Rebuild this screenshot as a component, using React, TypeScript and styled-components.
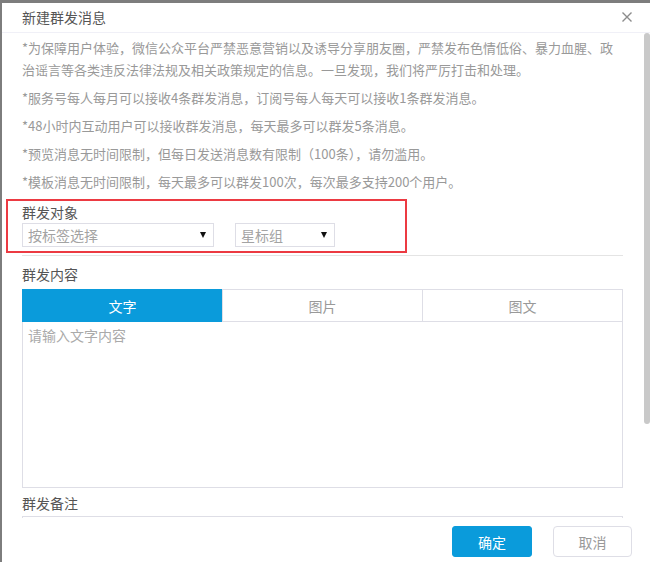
import styled, { createGlobalStyle } from 'styled-components';

const BLUE = '#0a9bdb';
const LINE = '#dedee6';

const GlobalStyle = createGlobalStyle`
  html, body {
    margin: 0;
    padding: 0;
    background: #7d7d7d;
  }
  body {
    font-family: "Noto Sans CJK SC", "Noto Sans", sans-serif;
  }
  * {
    box-sizing: border-box;
  }
`;

const Dialog = styled.div`
  margin: 3px 0 0 2px;
  width: 648px;
  height: 559px;
  background: #fff;
  display: flex;
  flex-direction: column;
  overflow: hidden;
`;

const Header = styled.div`
  flex-shrink: 0;
  height: 30px;
  padding: 0 18px 1px 20px;
  display: flex;
  align-items: center;
  justify-content: space-between;
  border-bottom: 1px solid #f0f0f7;
`;

const Title = styled.div`
  font-size: 14px;
  color: #555;
`;

const Close = styled.button`
  border: 0;
  padding: 0;
  background: none;
  width: 10px;
  height: 10px;
  display: flex;
  cursor: pointer;
`;

const Body = styled.div`
  flex: 1;
  min-height: 0;
  display: flex;
`;

const Scroller = styled.div`
  flex: 1;
  overflow: hidden;
`;

const ScrollTrack = styled.div`
  width: 6px;
  flex-shrink: 0;
`;

const Thumb = styled.div`
  height: 391px;
  border-radius: 3px;
  background: #c9c9c9;
`;

const Content = styled.div`
  padding: 4px 21px 29px 20px;
`;

const Notice = styled.p`
  margin: 0 0 6px;
  font-size: 13px;
  line-height: 22px;
  color: #999;
`;

const Highlight = styled.div`
  margin-left: -16px;
  width: 401px;
  border: 2px solid #ec3a42;
  padding: 1px 0 4px 14px;
`;

const Label = styled.div<{ gap?: number }>`
  margin-top: ${({ gap }) => gap ?? 0}px;
  font-size: 14px;
  line-height: 20px;
  color: #555;
`;

const SelectRow = styled.div`
  margin-top: 1px;
  display: flex;
  gap: 21px;
`;

const Select = styled.div<{ width: number }>`
  width: ${({ width }) => width}px;
  height: 24px;
  border: 1px solid ${LINE};
  padding: 0 7px 0 5px;
  display: flex;
  align-items: center;
  justify-content: space-between;
  font-size: 14px;
  color: #a3a3a3;
  cursor: pointer;
`;

const Caret = styled.span`
  width: 0;
  height: 0;
  border-left: 3.5px solid transparent;
  border-right: 3.5px solid transparent;
  border-top: 6px solid #111;
`;

const Divider = styled.div`
  margin-top: 2px;
  height: 1px;
  background: #e4e4e4;
`;

const TabBar = styled.div`
  margin-top: 5px;
  display: flex;
`;

const Tab = styled.div<{ active?: boolean }>`
  flex: 1;
  height: 33px;
  margin-left: -1px;
  &:first-child {
    margin-left: 0;
  }
  border: 1px solid ${({ active }) => (active ? BLUE : LINE)};
  background: ${({ active }) => (active ? BLUE : '#fff')};
  color: ${({ active }) => (active ? '#fff' : '#999')};
  font-size: 14px;
  display: flex;
  align-items: center;
  justify-content: center;
  cursor: pointer;
`;

const Editor = styled.div`
  height: 166px;
  border: 1px solid ${LINE};
  border-top: 0;
  padding: 3px 5px;
  font-size: 14px;
  line-height: 20px;
  color: #aaa;
`;

const RemarkBox = styled.div`
  margin-top: 3px;
  height: 90px;
  border: 1px solid ${LINE};
`;

const Footer = styled.div`
  flex-shrink: 0;
  height: 44px;
  padding: 8px 18px 0 0;
  display: flex;
  justify-content: flex-end;
  align-items: flex-start;
  gap: 21px;
`;

const Button = styled.button<{ primary?: boolean }>`
  width: ${({ primary }) => (primary ? 80 : 79)}px;
  height: 31px;
  border-radius: ${({ primary }) => (primary ? 3 : 4)}px;
  border: 1px solid ${({ primary }) => (primary ? BLUE : LINE)};
  background: ${({ primary }) => (primary ? BLUE : '#fff')};
  color: ${({ primary }) => (primary ? '#fff' : '#999')};
  font-family: inherit;
  font-size: 14px;
  padding: 0;
  cursor: pointer;
`;

const notices = [
  '*为保障用户体验，微信公众平台严禁恶意营销以及诱导分享朋友圈，严禁发布色情低俗、暴力血腥、政治谣言等各类违反法律法规及相关政策规定的信息。一旦发现，我们将严厉打击和处理。',
  '*服务号每人每月可以接收4条群发消息，订阅号每人每天可以接收1条群发消息。',
  '*48小时内互动用户可以接收群发消息，每天最多可以群发5条消息。',
  '*预览消息无时间限制，但每日发送消息数有限制（100条），请勿滥用。',
  '*模板消息无时间限制，每天最多可以群发100次，每次最多支持200个用户。',
];

const tabs = ['文字', '图片', '图文'];

export default function App() {
  return (
    <>
      <GlobalStyle />
      <Dialog>
        <Header>
          <Title>新建群发消息</Title>
          <Close aria-label="关闭">
            <svg width="10" height="10" viewBox="0 0 10 10">
              <path d="M0.5 0.5 L9.5 9.5 M9.5 0.5 L0.5 9.5" stroke="#8c8c8c" strokeWidth="1.4" />
            </svg>
          </Close>
        </Header>

        <Body>
          <Scroller>
            <Content>
              {notices.map((n) => (
                <Notice key={n}>{n}</Notice>
              ))}

              <Highlight>
                <Label>群发对象</Label>
                <SelectRow>
                  <Select width={192}>
                    <span>按标签选择</span>
                    <Caret />
                  </Select>
                  <Select width={100}>
                    <span>星标组</span>
                    <Caret />
                  </Select>
                </SelectRow>
              </Highlight>

              <Divider />

              <Label gap={8}>群发内容</Label>
              <TabBar>
                {tabs.map((t, i) => (
                  <Tab key={t} active={i === 0}>
                    {t}
                  </Tab>
                ))}
              </TabBar>
              <Editor>请输入文字内容</Editor>

              <Label gap={5}>群发备注</Label>
              <RemarkBox />
            </Content>
          </Scroller>
          <ScrollTrack>
            <Thumb />
          </ScrollTrack>
        </Body>

        <Footer>
          <Button primary>确定</Button>
          <Button>取消</Button>
        </Footer>
      </Dialog>
    </>
  );
}
